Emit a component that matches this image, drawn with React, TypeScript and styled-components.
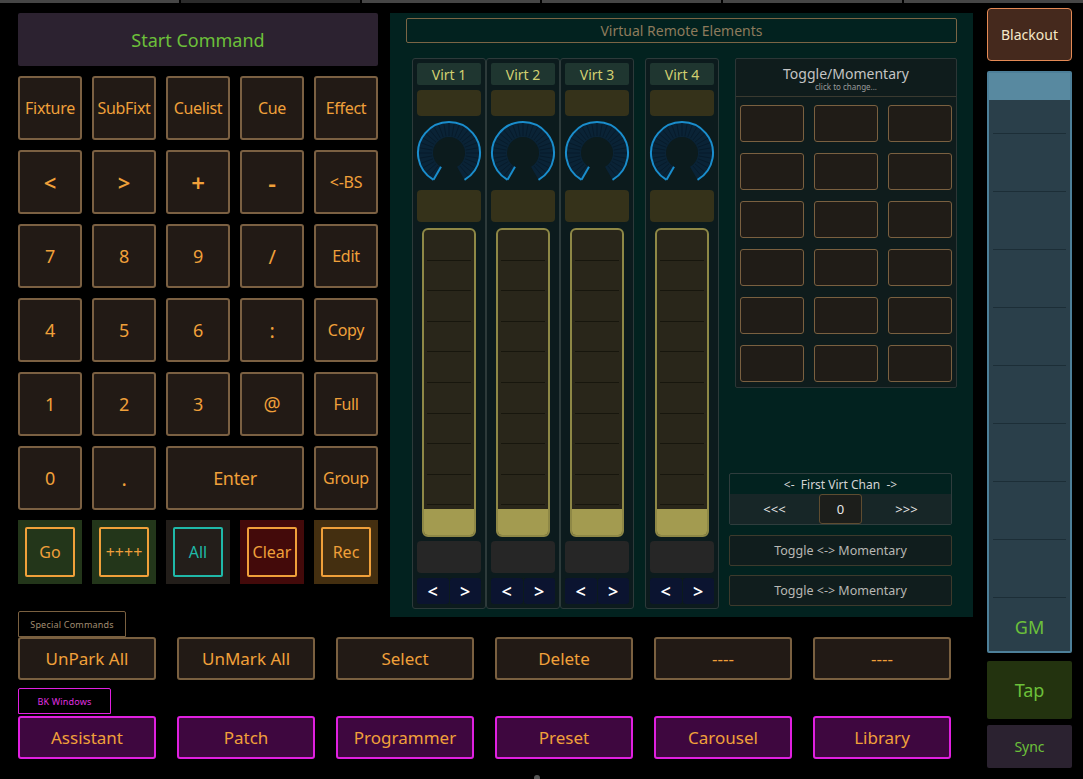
import React from 'react';
import styled, { createGlobalStyle } from 'styled-components';

const GlobalStyle = createGlobalStyle`
  html, body {
    margin: 0;
    padding: 0;
    background: #000;
  }
  body {
    font-family: 'Noto Sans', 'DejaVu Sans', sans-serif;
  }
`;

const ORANGE = '#f0a03a';
const GREEN = '#6cc03a';

const Screen = styled.div`
  position: relative;
  width: 1083px;
  height: 779px;
  background: #000;
  overflow: hidden;
`;

const TabStrip = styled.div`
  display: flex;
  gap: 2px;
  height: 3px;
`;

const TabSeg = styled.div<{ $dim?: boolean }>`
  flex: 1;
  background: ${p => (p.$dim ? '#2b2b2b' : '#464646')};
`;

const Workspace = styled.div`
  display: flex;
  gap: 14px;
`;

const MainColumn = styled.div`
  padding: 10px 0 0 18px;
`;

const TopSection = styled.div`
  display: flex;
  gap: 12px;
`;

/* ---------- left: command keypad ---------- */

const LeftPanel = styled.div`
  width: 360px;
  display: flex;
  flex-direction: column;
  gap: 10px;
`;

const StartCommand = styled.div`
  height: 53px;
  background: #2c2230;
  border-radius: 2px;
  color: ${GREEN};
  font-size: 18px;
  display: flex;
  align-items: center;
  justify-content: center;
`;

const Keypad = styled.div`
  display: grid;
  grid-template-columns: repeat(5, 64px);
  grid-auto-rows: 64px;
  gap: 10px;
`;

const Key = styled.div<{ $span?: number; $size: number; $bold?: boolean }>`
  grid-column: span ${p => p.$span || 1};
  box-sizing: border-box;
  background: #221a15;
  border: 2px solid #7b6042;
  border-radius: 3px;
  color: ${ORANGE};
  font-size: ${p => p.$size}px;
  font-weight: ${p => (p.$bold ? 600 : 400)};
  letter-spacing: -0.3px;
  display: flex;
  align-items: center;
  justify-content: center;
`;

const ActionCell = styled.div<{ $bg: string }>`
  box-sizing: border-box;
  background: ${p => p.$bg};
  padding: 7px;
  display: flex;
`;

const ActionInner = styled.div<{ $accent: string }>`
  flex: 1;
  border: 2px solid ${p => p.$accent};
  border-radius: 2px;
  color: ${p => p.$accent};
  font-size: 16px;
  display: flex;
  align-items: center;
  justify-content: center;
`;

/* ---------- middle: virtual remote ---------- */

const VirtualPanel = styled.div`
  width: 583px;
  height: 604px;
  box-sizing: border-box;
  background: #02221f;
  padding: 5px 16px 0 16px;
`;

const PanelHeader = styled.div`
  height: 25px;
  box-sizing: border-box;
  border: 1px solid #7a6545;
  border-radius: 2px;
  color: #8d7b5c;
  font-size: 14px;
  display: flex;
  align-items: center;
  justify-content: center;
`;

const VirtRow = styled.div`
  display: flex;
  margin: 15px 0 0 6px;
  height: 551px;
`;

const VirtColumn = styled.div<{ $gapBefore?: boolean }>`
  width: 74px;
  box-sizing: border-box;
  margin-left: ${p => (p.$gapBefore ? '11px' : '0')};
  border: 1.5px solid #2d3a3a;
  border-radius: 3px;
  background: #0c1b1d;
  padding: 4px 3.5px 0;
  display: flex;
  flex-direction: column;
  align-items: center;
`;

const VirtLabel = styled.div`
  width: 64px;
  height: 22px;
  background: #1f3630;
  border-radius: 2px;
  color: #d2d070;
  font-size: 14px;
  display: flex;
  align-items: center;
  justify-content: center;
`;

const OliveBox = styled.div<{ $h: number; $mt: number }>`
  width: 64px;
  height: ${p => p.$h}px;
  margin-top: ${p => p.$mt}px;
  background: #35321a;
  border-radius: 4px;
`;

const KnobWrap = styled.div`
  margin-top: 4px;
  height: 66px;
  display: flex;
  align-items: center;
  justify-content: center;
`;

const Fader = styled.div`
  position: relative;
  margin-top: 6px;
  width: 54px;
  height: 309px;
  box-sizing: border-box;
  border: 2px solid #8e8846;
  border-radius: 6px;
  background: #29261a;
  overflow: hidden;

  &::before {
    content: '';
    position: absolute;
    left: 3px;
    right: 3px;
    top: 0;
    bottom: 0;
    background: repeating-linear-gradient(
      to bottom,
      transparent 0 29.6px,
      #17160d 29.6px 30.6px
    );
  }
`;

const FaderHandle = styled.div`
  position: absolute;
  left: -2px;
  right: -2px;
  bottom: -2px;
  height: 28px;
  background: #a39b50;
  border-radius: 0 0 6px 6px;
`;

const GrayBox = styled.div`
  margin-top: 4px;
  width: 64px;
  height: 32px;
  background: #262626;
  border-radius: 4px;
`;

const ArrowPair = styled.div`
  margin-top: 5px;
  width: 64px;
  height: 26px;
  display: flex;
  gap: 1px;
`;

const ArrowBtn = styled.div`
  flex: 1;
  background: #0b1430;
  border-radius: 3px;
  color: #fff;
  font-size: 18px;
  font-weight: 600;
  display: flex;
  align-items: center;
  justify-content: center;
`;

const SideArea = styled.div`
  margin-left: 10px;
  width: 228px;
  display: flex;
  flex-direction: column;
`;

const TogglePanel = styled.div`
  margin-left: 6px;
  width: 222px;
  height: 330px;
  box-sizing: border-box;
  border: 1.5px solid #2c3636;
  border-radius: 2px;
  background: #0f1c1c;
`;

const ToggleHead = styled.div`
  height: 38px;
  box-sizing: border-box;
  border-bottom: 1px solid #3a3a30;
  display: flex;
  flex-direction: column;
  align-items: center;
  padding-top: 6px;
`;

const ToggleTitle = styled.div`
  color: #c4c4c4;
  font-size: 14px;
  line-height: 17px;
`;

const ToggleHint = styled.div`
  color: #9a9a9a;
  font-size: 8px;
  line-height: 10px;
`;

const ToggleGrid = styled.div`
  display: grid;
  grid-template-columns: repeat(3, 64px);
  grid-auto-rows: 37px;
  column-gap: 10px;
  row-gap: 11px;
  padding: 8px 0 0 3.5px;
`;

const ToggleKey = styled.div`
  box-sizing: border-box;
  background: #201c17;
  border: 1.5px solid #7a6040;
  border-radius: 3px;
`;

const Spacer = styled.div<{ $fixed?: number }>`
  flex: ${p => (p.$fixed ? `0 0 ${p.$fixed}px` : '1')};
`;

const ChanBox = styled.div`
  width: 223px;
  height: 52px;
  box-sizing: border-box;
  border: 1px solid #2f3d3d;
  border-radius: 2px;
  display: flex;
  flex-direction: column;
`;

const ChanTitle = styled.div`
  height: 20px;
  color: #d4d4d4;
  font-size: 12px;
  display: flex;
  align-items: center;
  justify-content: center;
  white-space: pre;
`;

const ChanControls = styled.div`
  flex: 1;
  display: grid;
  grid-template-columns: 1fr 43px 1fr;
  background: #172627;
`;

const ChanStep = styled.div`
  color: #e8e8e8;
  font-size: 13px;
  display: flex;
  align-items: center;
  justify-content: center;
`;

const ChanValue = styled.div`
  box-sizing: border-box;
  border: 1px solid #5e4c30;
  border-radius: 3px;
  background: #1c1e1b;
  color: #e8e8e8;
  font-size: 13px;
  display: flex;
  align-items: center;
  justify-content: center;
`;

const ModeButton = styled.div<{ $mt: number }>`
  margin-top: ${p => p.$mt}px;
  width: 223px;
  height: 31px;
  box-sizing: border-box;
  border: 1px solid #3d3a2c;
  border-radius: 2px;
  background: #101d1d;
  color: #b8b8b4;
  font-size: 12.5px;
  display: flex;
  align-items: center;
  justify-content: center;
`;

/* ---------- bottom rows ---------- */

const BottomSection = styled.div`
  margin-top: -6px;
`;

const GroupTab = styled.div<{ $w: number; $color: string; $text: string }>`
  width: ${p => p.$w}px;
  height: 26px;
  box-sizing: border-box;
  border: 1.5px solid ${p => p.$color};
  border-radius: 2px 2px 0 0;
  color: ${p => p.$text};
  font-size: 9px;
  letter-spacing: 0.2px;
  display: flex;
  align-items: center;
  justify-content: center;
`;

const CommandRow = styled.div<{ $mt?: number }>`
  display: flex;
  gap: 21px;
  margin-top: ${p => p.$mt || 0}px;
`;

const CommandButton = styled.div<{ $purple?: boolean }>`
  width: 138px;
  height: 43px;
  box-sizing: border-box;
  background: ${p => (p.$purple ? '#3e073f' : '#221a15')};
  border: ${p => (p.$purple ? '2px solid #e020e0' : '2px solid #7a6040')};
  border-radius: 3px;
  color: ${ORANGE};
  font-size: 17px;
  display: flex;
  align-items: center;
  justify-content: center;
`;

/* ---------- right column ---------- */

const RightColumn = styled.div`
  padding-top: 5px;
  width: 85px;
  display: flex;
  flex-direction: column;
`;

const Blackout = styled.div`
  height: 53px;
  box-sizing: border-box;
  background: #45291d;
  border: 1.5px solid #e58a55;
  border-radius: 4px;
  color: #f5e8c8;
  font-size: 14px;
  display: flex;
  align-items: center;
  justify-content: center;
`;

const MasterFader = styled.div`
  position: relative;
  margin-top: 10px;
  height: 582px;
  box-sizing: border-box;
  border: 2px solid #4d7f99;
  border-radius: 2px;
  background: #2a3f4a;
  display: flex;
  flex-direction: column;

  &::before {
    content: '';
    position: absolute;
    left: 4px;
    right: 4px;
    top: 3px;
    bottom: 0;
    background: repeating-linear-gradient(
      to bottom,
      transparent 0 57px,
      #1c2e37 57px 58px
    );
  }
`;

const MasterHandle = styled.div`
  position: relative;
  height: 27px;
  background: #5889a0;
`;

const MasterLabel = styled.div`
  position: relative;
  margin-top: auto;
  height: 48px;
  color: ${GREEN};
  font-size: 18px;
  display: flex;
  align-items: center;
  justify-content: center;
`;

const SideButton = styled.div<{ $bg: string; $h: number; $mt: number; $size: number }>`
  margin-top: ${p => p.$mt}px;
  height: ${p => p.$h}px;
  background: ${p => p.$bg};
  border-radius: 2px;
  color: ${GREEN};
  font-size: ${p => p.$size}px;
  display: flex;
  align-items: center;
  justify-content: center;
`;

const PageDot = styled.div`
  position: absolute;
  left: 534px;
  bottom: -2px;
  width: 6px;
  height: 6px;
  border-radius: 50%;
  background: #555;
`;

/* ---------- knob drawing ---------- */

const C = 33;
const pt = (deg: number, r: number) => {
  const a = (deg * Math.PI) / 180;
  return [C + r * Math.sin(a), C - r * Math.cos(a)];
};

const Knob: React.FC = () => {
  const [ox1, oy1] = pt(-150, 31);
  const [ox2, oy2] = pt(150, 31);
  const [rx1, ry1] = pt(-150, 23.5);
  const [rx2, ry2] = pt(150, 23.5);
  const [ix, iy] = pt(-150, 16);
  const ticks = [];
  for (let d = -140; d <= 140; d += 10) {
    const [a, b] = pt(d, 17);
    const [c, e] = pt(d, 30);
    ticks.push(<line key={d} x1={a} y1={b} x2={c} y2={e} stroke="#071b2b" strokeWidth={1} />);
  }
  return (
    <svg width="66" height="66" viewBox="0 0 66 66">
      <path
        d={`M${rx1} ${ry1} A23.5 23.5 0 1 1 ${rx2} ${ry2}`}
        fill="none"
        stroke="#0a2336"
        strokeWidth={15}
      />
      {ticks}
      <path
        d={`M${ox1} ${oy1} A31 31 0 1 1 ${ox2} ${oy2}`}
        fill="none"
        stroke="#1a8dcc"
        strokeWidth={2}
      />
      <line x1={ix} y1={iy} x2={ox1} y2={oy1} stroke="#1a8dcc" strokeWidth={2} />
    </svg>
  );
};

const VirtChannel: React.FC<{ label: string; gapBefore?: boolean }> = ({ label, gapBefore }) => (
  <VirtColumn $gapBefore={gapBefore}>
    <VirtLabel>{label}</VirtLabel>
    <OliveBox $h={26} $mt={5} />
    <KnobWrap>
      <Knob />
    </KnobWrap>
    <OliveBox $h={32} $mt={4} />
    <Fader>
      <FaderHandle />
    </Fader>
    <GrayBox />
    <ArrowPair>
      <ArrowBtn>&lt;</ArrowBtn>
      <ArrowBtn>&gt;</ArrowBtn>
    </ArrowPair>
  </VirtColumn>
);

type KeyDef = { label: string; span?: number; size?: number; bold?: boolean };

const keys: KeyDef[] = [
  { label: 'Fixture', size: 16 },
  { label: 'SubFixt', size: 16 },
  { label: 'Cuelist', size: 16 },
  { label: 'Cue', size: 16 },
  { label: 'Effect', size: 16 },
  { label: '<', size: 22, bold: true },
  { label: '>', size: 22, bold: true },
  { label: '+', size: 24, bold: true },
  { label: '-', size: 24, bold: true },
  { label: '<-BS', size: 16 },
  { label: '7' },
  { label: '8' },
  { label: '9' },
  { label: '/', size: 20 },
  { label: 'Edit', size: 16 },
  { label: '4' },
  { label: '5' },
  { label: '6' },
  { label: ':', size: 20 },
  { label: 'Copy', size: 16 },
  { label: '1' },
  { label: '2' },
  { label: '3' },
  { label: '@', size: 19 },
  { label: 'Full', size: 16 },
  { label: '0' },
  { label: '.', size: 20 },
  { label: 'Enter', span: 2 },
  { label: 'Group', size: 16 },
];

const actions = [
  { label: 'Go', bg: '#23361a', accent: ORANGE },
  { label: '++++', bg: '#23361a', accent: ORANGE },
  { label: 'All', bg: '#231e1a', accent: '#1fb8a8' },
  { label: 'Clear', bg: '#430a0a', accent: ORANGE },
  { label: 'Rec', bg: '#442f10', accent: ORANGE },
];

const specials = ['UnPark All', 'UnMark All', 'Select', 'Delete', '----', '----'];
const windows = ['Assistant', 'Patch', 'Programmer', 'Preset', 'Carousel', 'Library'];

export default function App() {
  return (
    <Screen>
      <GlobalStyle />
      <TabStrip>
        <TabSeg />
        <TabSeg $dim />
        <TabSeg />
        <TabSeg />
        <TabSeg />
        <TabSeg />
      </TabStrip>
      <Workspace>
        <MainColumn>
          <TopSection>
            <LeftPanel>
              <StartCommand>Start Command</StartCommand>
              <Keypad>
                {keys.map((k, i) => (
                  <Key key={i} $span={k.span} $size={k.size || 18} $bold={k.bold}>
                    {k.label}
                  </Key>
                ))}
                {actions.map(a => (
                  <ActionCell key={a.label} $bg={a.bg}>
                    <ActionInner $accent={a.accent}>{a.label}</ActionInner>
                  </ActionCell>
                ))}
              </Keypad>
            </LeftPanel>

            <VirtualPanel>
              <PanelHeader>Virtual Remote Elements</PanelHeader>
              <VirtRow>
                <VirtChannel label="Virt 1" />
                <VirtChannel label="Virt 2" />
                <VirtChannel label="Virt 3" />
                <VirtChannel label="Virt 4" gapBefore />
                <SideArea>
                  <TogglePanel>
                    <ToggleHead>
                      <ToggleTitle>Toggle/Momentary</ToggleTitle>
                      <ToggleHint>click to change...</ToggleHint>
                    </ToggleHead>
                    <ToggleGrid>
                      {Array.from({ length: 18 }).map((_, i) => (
                        <ToggleKey key={i} />
                      ))}
                    </ToggleGrid>
                  </TogglePanel>
                  <Spacer />
                  <ChanBox>
                    <ChanTitle>{'<-  First Virt Chan  ->'}</ChanTitle>
                    <ChanControls>
                      <ChanStep>&lt;&lt;&lt;</ChanStep>
                      <ChanValue>0</ChanValue>
                      <ChanStep>&gt;&gt;&gt;</ChanStep>
                    </ChanControls>
                  </ChanBox>
                  <ModeButton $mt={10}>Toggle &lt;-&gt; Momentary</ModeButton>
                  <ModeButton $mt={9}>Toggle &lt;-&gt; Momentary</ModeButton>
                  <Spacer $fixed={3} />
                </SideArea>
              </VirtRow>
            </VirtualPanel>
          </TopSection>

          <BottomSection>
            <GroupTab $w={108} $color="#7a6040" $text="#a08c70">
              Special Commands
            </GroupTab>
            <CommandRow>
              {specials.map((s, i) => (
                <CommandButton key={i}>{s}</CommandButton>
              ))}
            </CommandRow>
            <CommandRow $mt={8}>
              <GroupTab $w={93} $color="#e020e0" $text="#e030e0">
                BK Windows
              </GroupTab>
            </CommandRow>
            <CommandRow $mt={2}>
              {windows.map(w => (
                <CommandButton key={w} $purple>
                  {w}
                </CommandButton>
              ))}
            </CommandRow>
          </BottomSection>
        </MainColumn>

        <RightColumn>
          <Blackout>Blackout</Blackout>
          <MasterFader>
            <MasterHandle />
            <MasterLabel>GM</MasterLabel>
          </MasterFader>
          <SideButton $bg="#23330f" $h={58} $mt={8} $size={18}>
            Tap
          </SideButton>
          <SideButton $bg="#2b2230" $h={43} $mt={6} $size={14}>
            Sync
          </SideButton>
        </RightColumn>
      </Workspace>
      <PageDot />
    </Screen>
  );
}
